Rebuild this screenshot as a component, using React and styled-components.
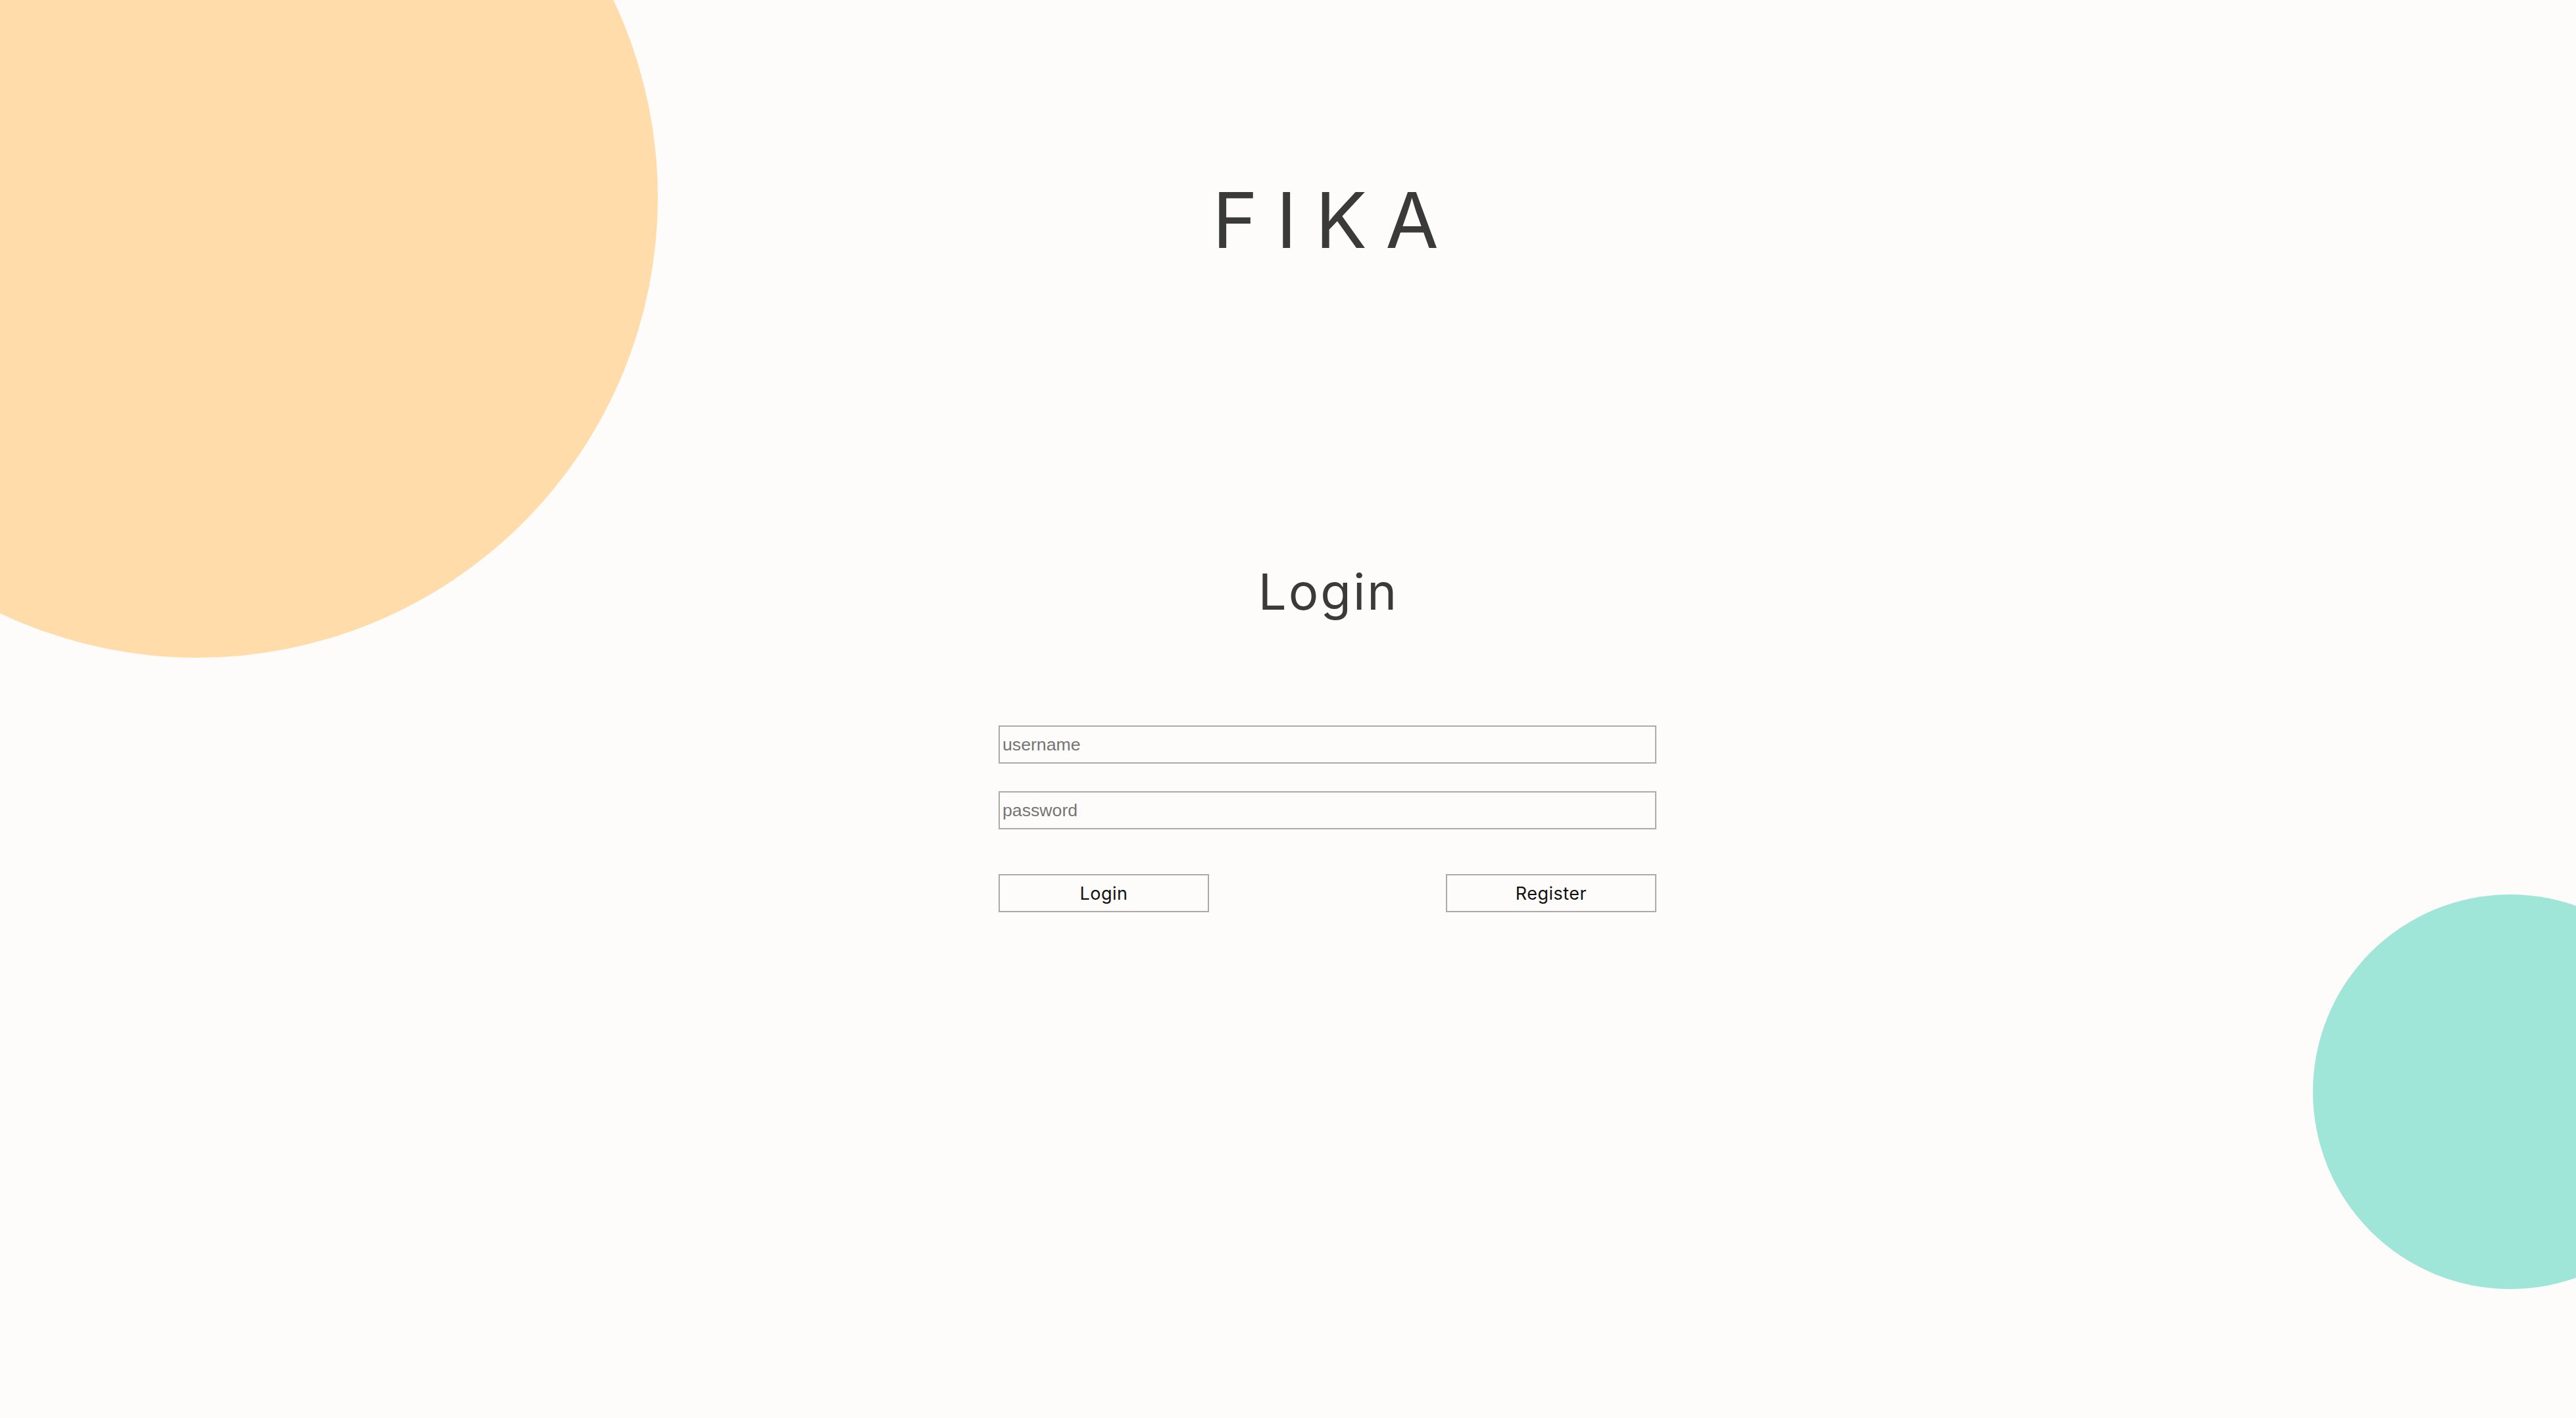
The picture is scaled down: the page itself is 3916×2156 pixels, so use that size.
import React from 'react';
import styled, { createGlobalStyle } from 'styled-components';

const GlobalStyle = createGlobalStyle`
  html, body {
    margin: 0;
    padding: 0;
    background: #fdfcfa;
  }
  body {
    font-family: Inter, "Noto Sans", sans-serif;
    color: #3a3a3a;
  }
`;

const Page = styled.div`
  position: relative;
  width: 100vw;
  height: 100vh;
  overflow: hidden;
  background: #fdfcfa;
  box-sizing: border-box;
  padding-left: 120px;
`;

const Blob = styled.div`
  position: absolute;
  border-radius: 50%;
  width: ${(p) => p.size}px;
  height: ${(p) => p.size}px;
  background: ${(p) => p.color};
  left: ${(p) => (p.left !== undefined ? `${p.left}px` : 'auto')};
  right: ${(p) => (p.right !== undefined ? `${p.right}px` : 'auto')};
  top: ${(p) => p.top}px;
`;

const Column = styled.main`
  position: relative;
  display: flex;
  flex-direction: column;
  align-items: center;
  padding-top: 276px;
`;

const Brand = styled.h1`
  margin: 0 calc(-0.24em + 6px) 0 0;
  font-family: Inter, "Noto Sans", sans-serif;
  font-weight: 400;
  font-size: 117px;
  line-height: 1;
  letter-spacing: 0.24em;
  color: #3a3a3a;
`;

const Heading = styled.h2`
  margin: 468px -3px 0 0;
  font-family: Inter, "Noto Sans", sans-serif;
  font-weight: 400;
  font-size: 76px;
  line-height: 1;
  letter-spacing: 3px;
  color: #3a3a3a;
`;

const Form = styled.form`
  width: 1000px;
  margin-top: 166px;
  display: flex;
  flex-direction: column;
`;

const Field = styled.input`
  box-sizing: border-box;
  width: 100%;
  height: 58px;
  margin: 0 0 42px;
  padding: 0 4px;
  border: 2px solid #ababab;
  background: transparent;
  font-family: "Liberation Sans", Arial, sans-serif;
  font-size: 26.67px;
  color: #222;
  outline: none;

  &::placeholder {
    color: #757575;
  }

  &:last-of-type {
    margin-bottom: 0;
  }
`;

const Actions = styled.div`
  display: flex;
  justify-content: space-between;
  margin-top: 68px;
`;

const Button = styled.button`
  box-sizing: border-box;
  width: 320px;
  height: 58px;
  border: 2px solid #ababab;
  background: transparent;
  font-family: Inter, "Noto Sans", sans-serif;
  font-size: 27px;
  letter-spacing: 0.5px;
  color: #111;
  cursor: pointer;
`;

const App = () => (
  <Page>
    <GlobalStyle />
    <Blob color="#ffdcaa" size={1400} left={-400} top={-400} />
    <Blob color="#a0e6d8" size={600} right={-200} top={1360} />

    <Column>
      <Brand>FIKA</Brand>
      <Heading>Login</Heading>

      <Form onSubmit={(e) => e.preventDefault()}>
        <Field type="text" placeholder="username" />
        <Field type="password" placeholder="password" />
        <Actions>
          <Button type="submit">Login</Button>
          <Button type="button">Register</Button>
        </Actions>
      </Form>
    </Column>
  </Page>
);

export default App;
